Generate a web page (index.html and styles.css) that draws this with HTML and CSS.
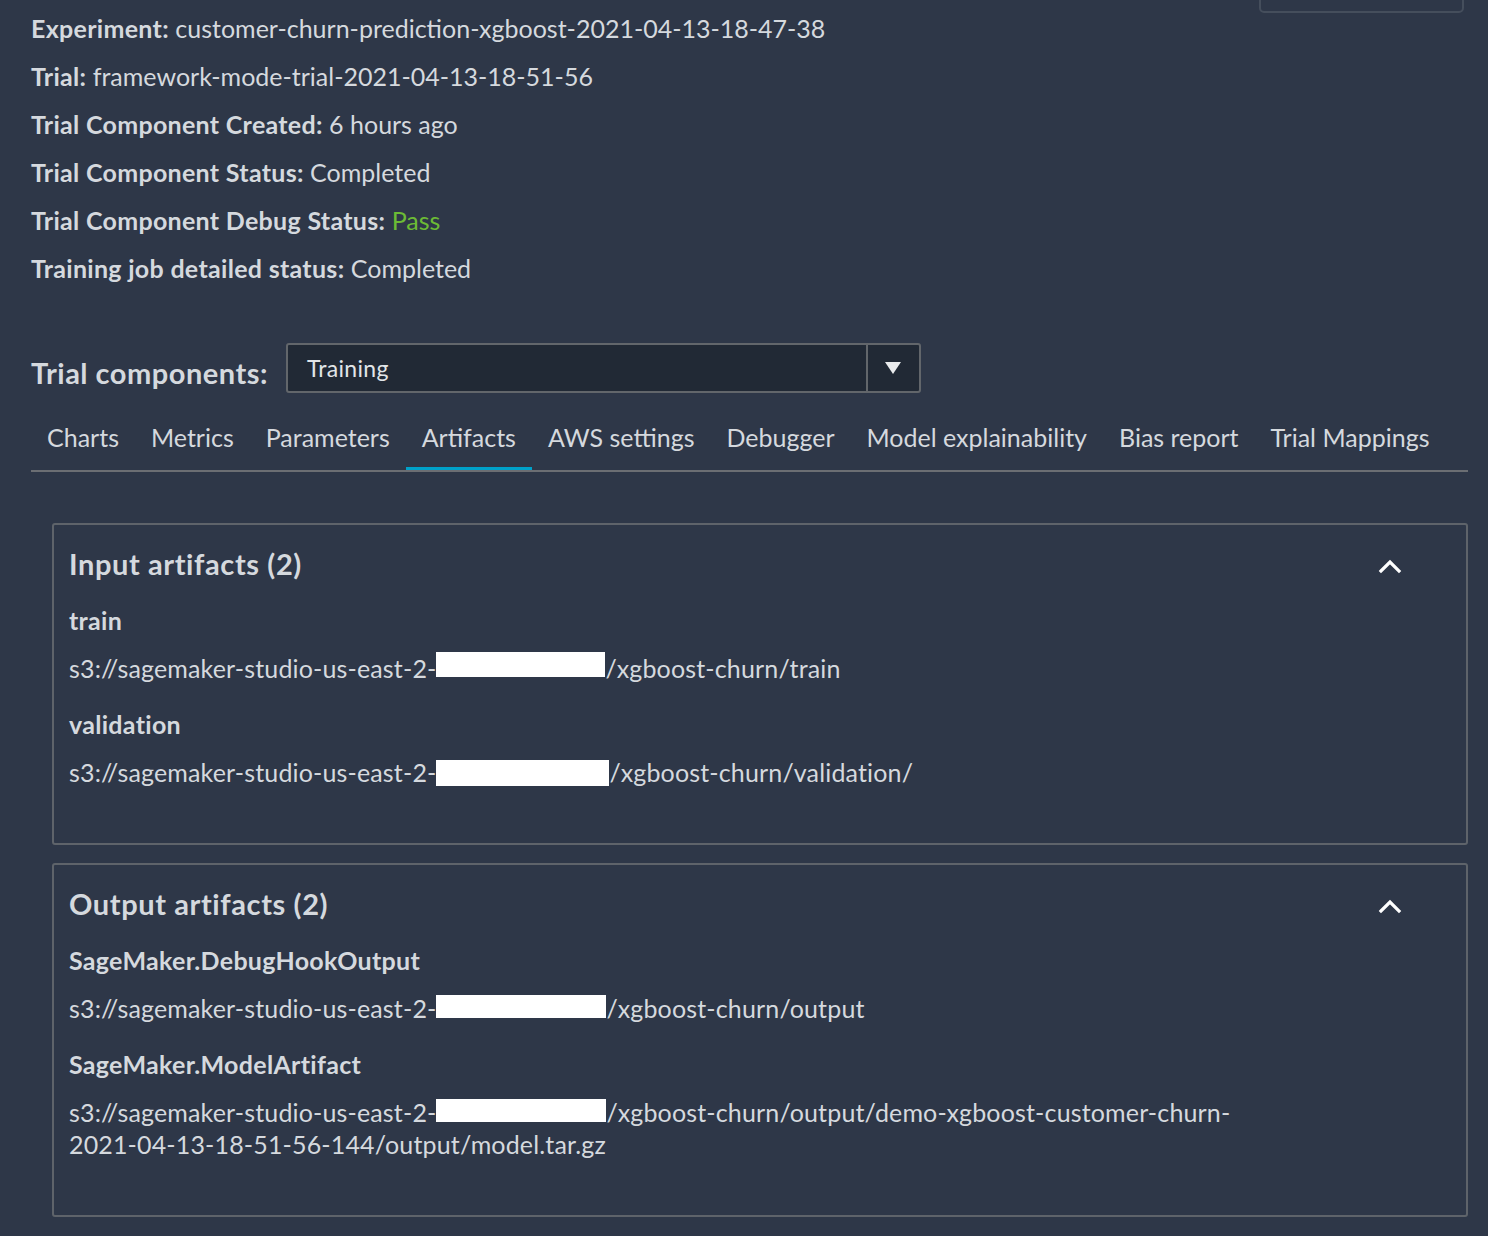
FILE: index.html
```html
<!DOCTYPE html>
<html lang="en">
<head>
<meta charset="utf-8">
<title>Trial component details</title>
<link rel="stylesheet" href="styles.css">
</head>
<body>
<div class="page">
  <header class="header">
    <div class="info">
      <div class="info-line"><b>Experiment:</b> customer-churn-prediction-xgboost-2021-04-13-18-47-38</div>
      <div class="info-line"><b>Trial:</b> framework-mode-trial-2021-04-13-18-51-56</div>
      <div class="info-line"><b>Trial Component Created:</b> 6 hours ago</div>
      <div class="info-line"><b>Trial Component Status:</b> Completed</div>
      <div class="info-line"><b>Trial Component Debug Status:</b> <span class="pass">Pass</span></div>
      <div class="info-line"><b>Training job detailed status:</b> Completed</div>
    </div>
    <div class="top-button"></div>
  </header>

  <div class="components-row">
    <span class="components-label">Trial components:</span>
    <div class="select">
      <span class="select-value">Training</span>
      <span class="select-arrow">
        <svg width="18" height="14" viewBox="0 0 18 14"><path d="M1 1 H17 L9 13 Z" fill="#e9ebed"/></svg>
      </span>
    </div>
  </div>

  <nav class="tabs">
    <span class="tab">Charts</span>
    <span class="tab">Metrics</span>
    <span class="tab">Parameters</span>
    <span class="tab active">Artifacts</span>
    <span class="tab">AWS settings</span>
    <span class="tab">Debugger</span>
    <span class="tab">Model explainability</span>
    <span class="tab">Bias report</span>
    <span class="tab">Trial Mappings</span>
  </nav>

  <section class="card">
    <div class="card-head">
      <h2 class="card-title">Input artifacts (2)</h2>
      <svg class="chevron" width="24" height="16" viewBox="0 0 24 16"><path d="M3 13 L12 4 L21 13" fill="none" stroke="#ffffff" stroke-width="3.2" stroke-linecap="square"/></svg>
    </div>
    <div class="item">
      <div class="item-label">train</div>
      <div class="item-value">s3://sagemaker-studio-us-east-2-<span class="redact r1"></span>/xgboost-churn/train</div>
    </div>
    <div class="item">
      <div class="item-label">validation</div>
      <div class="item-value">s3://sagemaker-studio-us-east-2-<span class="redact r2"></span>/xgboost-churn/validation/</div>
    </div>
  </section>

  <section class="card">
    <div class="card-head">
      <h2 class="card-title">Output artifacts (2)</h2>
      <svg class="chevron" width="24" height="16" viewBox="0 0 24 16"><path d="M3 13 L12 4 L21 13" fill="none" stroke="#ffffff" stroke-width="3.2" stroke-linecap="square"/></svg>
    </div>
    <div class="item">
      <div class="item-label">SageMaker.DebugHookOutput</div>
      <div class="item-value">s3://sagemaker-studio-us-east-2-<span class="redact r3"></span>/xgboost-churn/output</div>
    </div>
    <div class="item">
      <div class="item-label">SageMaker.ModelArtifact</div>
      <div class="item-value">s3://sagemaker-studio-us-east-2-<span class="redact r4"></span>/xgboost-churn/output/demo-xgboost-customer-churn-<br>2021-04-13-18-51-56-144/output/model.tar.gz</div>
    </div>
  </section>
</div>
</body>
</html>
```

FILE: styles.css
```css
html, body {
  margin: 0;
  padding: 0;
  background: #2e3748;
}

body {
  font-family: Lato, "Open Sans", "Noto Sans", sans-serif;
  color: #d5d9de;
  font-size: 25px;
}

b,
.item-label {
  font-weight: 700;
  letter-spacing: 0.3px;
}

.page {
  padding: 0 20px 0 31px;
}

.header {
  display: flex;
  justify-content: space-between;
  align-items: flex-start;
}

.info {
  padding-top: 4px;
}

.info-line {
  line-height: 48px;
  height: 48px;
  white-space: nowrap;
}

.pass {
  color: #6cbb35;
}

.top-button {
  width: 201px;
  height: 30px;
  margin-top: -21px;
  margin-right: 4px;
  border: 2px solid #454e5c;
  border-radius: 5px;
}

.components-row {
  display: flex;
  align-items: flex-start;
  gap: 18px;
  margin-top: 51px;
}

.components-label {
  font-size: 29px;
  font-weight: 700;
  letter-spacing: 0.5px;
  line-height: 36px;
  margin-top: 12px;
}

.select {
  display: flex;
  width: 635px;
  height: 50px;
  box-sizing: border-box;
  border: 2px solid #62666b;
  border-radius: 3px;
  background: #212935;
}

.select-value {
  flex: 1;
  padding-left: 19px;
  line-height: 46px;
  font-size: 23px;
  letter-spacing: 0.3px;
  color: #e2e5e8;
}

.select-arrow {
  width: 51px;
  border-left: 2px solid #62666b;
  display: flex;
  align-items: center;
  justify-content: center;
}

.tabs {
  display: flex;
  margin-top: 20px;
  border-bottom: 2px solid #6b6e73;
}

.tab {
  padding: 0 16px;
  line-height: 48px;
  height: 57px;
  box-sizing: border-box;
  border-bottom: 3px solid transparent;
  white-space: nowrap;
  color: #d5d9de;
}

.tab.active {
  border-bottom-color: #00a1c9;
}

.card {
  margin: 51px 0 0 21px;
  border: 2px solid #5e636a;
  border-radius: 3px;
  padding: 23px 15px 23px 15px;
}

.card + .card {
  margin-top: 18px;
}

.card-head {
  display: flex;
  justify-content: space-between;
  align-items: center;
  height: 32px;
  margin-bottom: 24px;
}

.card-title {
  margin: 0;
  font-size: 29px;
  font-weight: 700;
  letter-spacing: 0.6px;
  line-height: 32px;
}

.chevron {
  margin-right: 49px;
  margin-top: 4px;
}

.item {
  margin-bottom: 32px;
}

.item:not(:last-child) {
  margin-bottom: 24px;
}

.item-label {
  line-height: 32px;
}

.item-value {
  margin-top: 16px;
  line-height: 32px;
  letter-spacing: 0.15px;
}

.redact {
  display: inline-block;
  height: 25px;
  background: #ffffff;
  vertical-align: top;
}

.r1 { width: 169px; }
.r2 { width: 173px; margin-top: 4px; height: 26px; }
.r3 { width: 170px; margin-top: 3px; height: 23px; }
.r4 { width: 170px; margin-top: 3px; height: 23px; }
```
